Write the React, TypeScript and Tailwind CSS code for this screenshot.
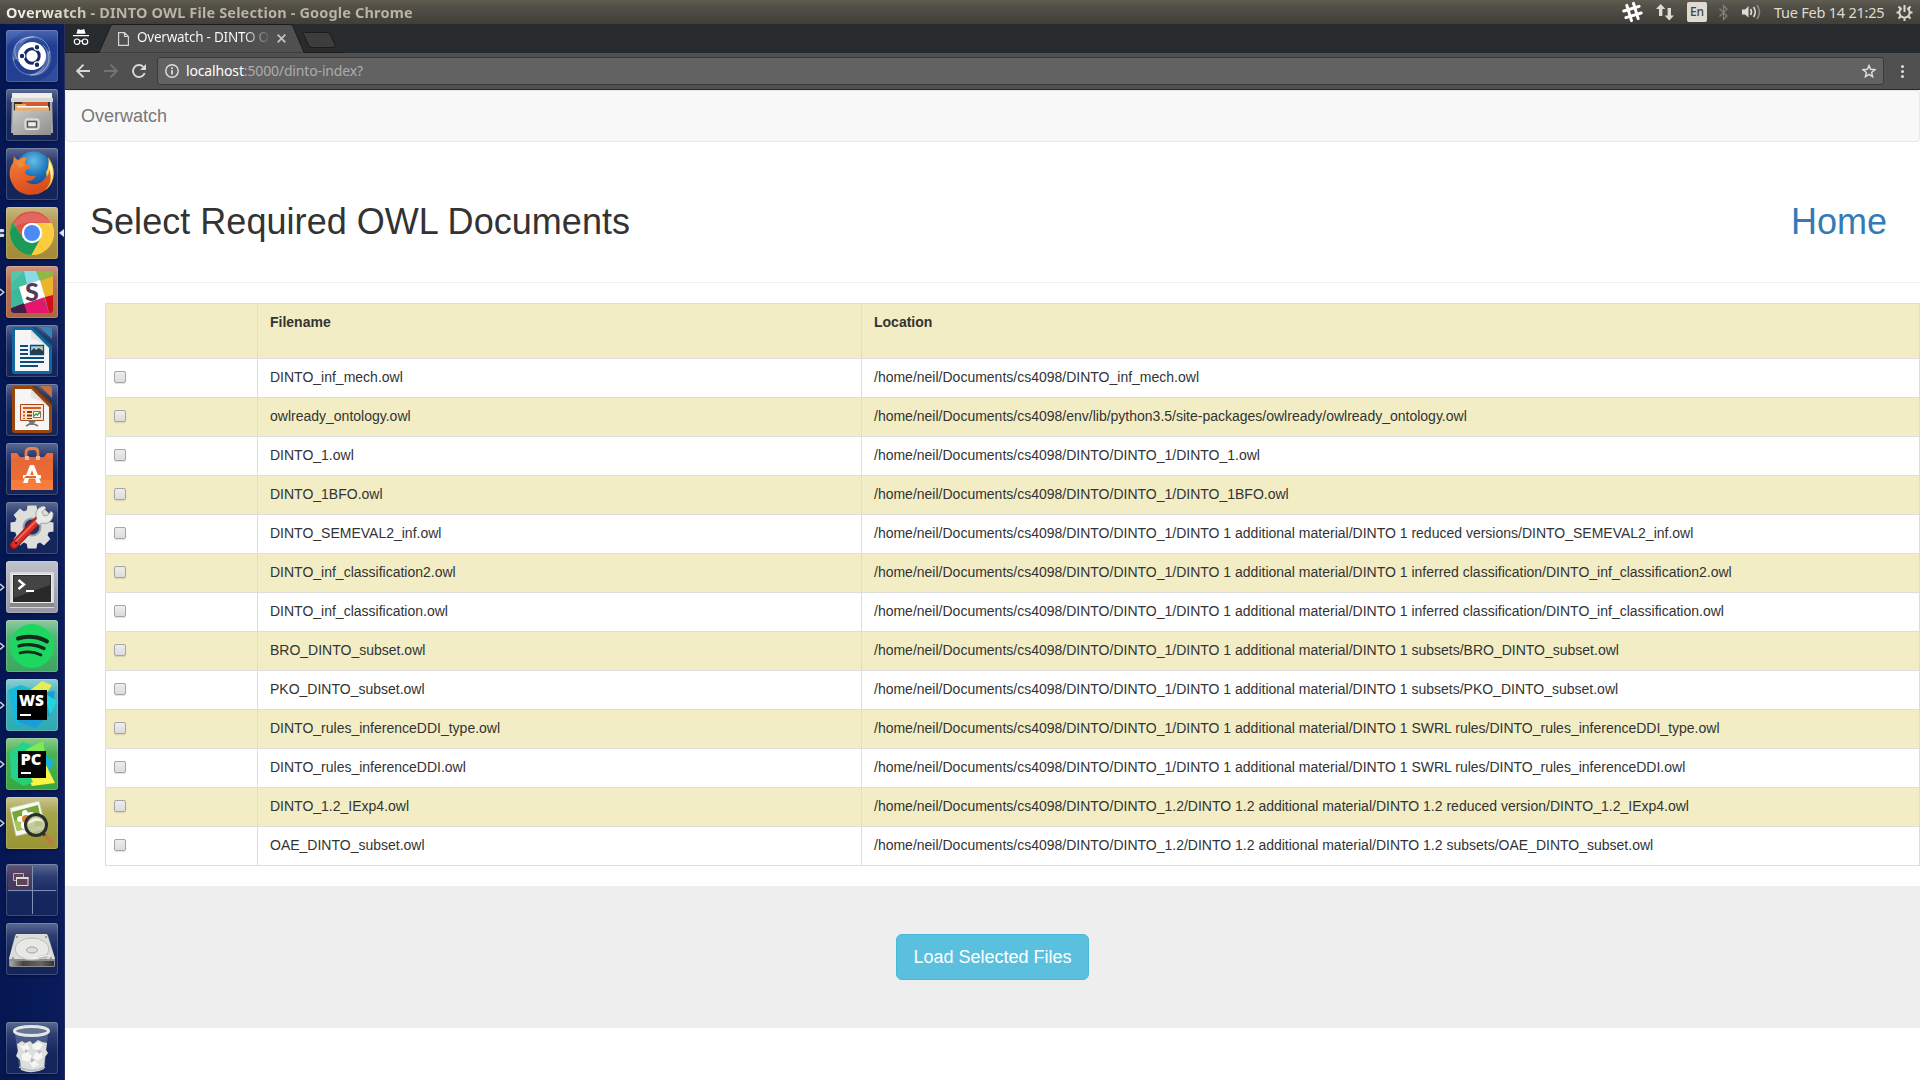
import React from 'react';

const files: [string, string][] = [
  ['DINTO_inf_mech.owl', '/home/neil/Documents/cs4098/DINTO_inf_mech.owl'],
  ['owlready_ontology.owl', '/home/neil/Documents/cs4098/env/lib/python3.5/site-packages/owlready/owlready_ontology.owl'],
  ['DINTO_1.owl', '/home/neil/Documents/cs4098/DINTO/DINTO_1/DINTO_1.owl'],
  ['DINTO_1BFO.owl', '/home/neil/Documents/cs4098/DINTO/DINTO_1/DINTO_1BFO.owl'],
  ['DINTO_SEMEVAL2_inf.owl', '/home/neil/Documents/cs4098/DINTO/DINTO_1/DINTO 1 additional material/DINTO 1 reduced versions/DINTO_SEMEVAL2_inf.owl'],
  ['DINTO_inf_classification2.owl', '/home/neil/Documents/cs4098/DINTO/DINTO_1/DINTO 1 additional material/DINTO 1 inferred classification/DINTO_inf_classification2.owl'],
  ['DINTO_inf_classification.owl', '/home/neil/Documents/cs4098/DINTO/DINTO_1/DINTO 1 additional material/DINTO 1 inferred classification/DINTO_inf_classification.owl'],
  ['BRO_DINTO_subset.owl', '/home/neil/Documents/cs4098/DINTO/DINTO_1/DINTO 1 additional material/DINTO 1 subsets/BRO_DINTO_subset.owl'],
  ['PKO_DINTO_subset.owl', '/home/neil/Documents/cs4098/DINTO/DINTO_1/DINTO 1 additional material/DINTO 1 subsets/PKO_DINTO_subset.owl'],
  ['DINTO_rules_inferenceDDI_type.owl', '/home/neil/Documents/cs4098/DINTO/DINTO_1/DINTO 1 additional material/DINTO 1 SWRL rules/DINTO_rules_inferenceDDI_type.owl'],
  ['DINTO_rules_inferenceDDI.owl', '/home/neil/Documents/cs4098/DINTO/DINTO_1/DINTO 1 additional material/DINTO 1 SWRL rules/DINTO_rules_inferenceDDI.owl'],
  ['DINTO_1.2_IExp4.owl', '/home/neil/Documents/cs4098/DINTO/DINTO_1.2/DINTO 1.2 additional material/DINTO 1.2 reduced version/DINTO_1.2_IExp4.owl'],
  ['OAE_DINTO_subset.owl', '/home/neil/Documents/cs4098/DINTO/DINTO_1.2/DINTO 1.2 additional material/DINTO 1.2 subsets/OAE_DINTO_subset.owl'],
];

/* ---------- Launcher artwork, each on a 52 x 52 grid ---------- */

const Dash = () => (
  <>
    <g fill="none" stroke="#fff">
      <path d="M15 34C4 24 7 6 28 7" strokeOpacity=".4" strokeWidth="1" />
      <path d="M14 13C20 3 42 4 44 24" strokeOpacity=".4" strokeWidth="1" />
      <path d="M37 15C49 26 42 46 24 45" strokeOpacity=".4" strokeWidth="1" />
      <path d="M38 37C29 51 8 45 7 27" strokeOpacity=".35" strokeWidth="1" />
    </g>
    <path d="M7 31C3 12 18 5 31 7C19 8 12 16 13 28ZM44 20C49 38 36 49 21 45C33 44 40 36 39 24Z" fill="#fff" opacity=".22" />
    <path d="M1 17C6 7 14 3 20 1L1 1ZM33 51C43 47 48 40 51 33V51Z" fill="#7c9ee8" opacity=".15" />
    <circle cx="26" cy="26" r="14" fill="#fff" />
    <circle cx="26" cy="26" r="7.2" fill="none" stroke="#182a66" strokeWidth="3" />
    <g stroke="#fff" strokeWidth="1.2" fill="#182a66">
      <circle cx="16" cy="26" r="2.8" />
      <circle cx="31" cy="17.3" r="2.8" />
      <circle cx="31" cy="34.7" r="2.8" />
    </g>
  </>
);

const Files = () => (
  <>
    <path d="M6 5h40l1 39H5z" fill="#a8a8a6" />
    <path d="M6 4h40v8H6z" fill="#eeeeec" />
    <path d="M5 9h42v4H5z" fill="#d5d5d3" />
    <path d="M8 13h36v9H8z" fill="#3a3532" />
    <path d="M16 13h26v5H16z" fill="#d05a33" />
    <path d="M9 15h11v7H9zM9 18h34v5H9z" fill="#f0ab62" />
    <path d="M11 17h31v1.4H11z" fill="#fff" />
    <path d="M7 21.5h38V46H7z" fill="url(#silver)" />
    <rect x="19" y="30" width="14" height="10.5" rx="2" fill="#c9c9c9" stroke="#ececec" />
    <rect x="21.5" y="32.5" width="9" height="5.5" fill="#eee" stroke="#555" strokeWidth="1.4" />
  </>
);

const Firefox = () => (
  <>
    <circle cx="27.5" cy="22.5" r="19" fill="url(#ffblue)" />
    <path d="M42 9C50 19 50 33 41 41L31 46C40 38 42 34 40 24C43 20 43 14 42 9Z" fill="#f7c53a" />
    <path d="M43 13C48 20 48 28 43 36C44 29 42 27 43 13Z" fill="#fff3a8" />
    <path d="M8 8C9 10 11 12 13 12C16 9 19 9 21 10C19 12 19 14 19 16L24 17C25 19 23 21 20 22L19 25C22 29 26 28 30 28C27 33 23 33 20 33C26 39 36 36 40 29C43 27 43 24 43 21C47 30 44 38 38 43C27 50 12 47 7 37C2 29 3 20 7 15Z" fill="url(#ffox)" />
    <path d="M13 12C16 9 19 9 21 10C19 12 18 15 19 17L14 20C9 15 11 14 13 12Z" fill="#f08a35" />
  </>
);

const Chrome = () => (
  <>
    <circle cx="26" cy="26" r="22" fill="#f9ca38" />
    <path d="M6.9 15.1A22 22 0 0 1 45.2 16H26L17 31Z" fill="#dc5549" />
    <path d="M6.9 15.1A22 22 0 0 0 25.5 48L35 31L26 36L17 31Z" fill="#1b9a59" />
    <path d="M25.5 48L35 31L35 16H45.6A22 22 0 0 1 25.5 48Z" fill="#fbcc3d" />
    <path d="M5 22A22 22 0 0 1 47 21C34 12 18 13 5 22Z" fill="#fff" opacity=".12" />
    <circle cx="26" cy="26" r="10.2" fill="#fff" />
    <circle cx="26" cy="26" r="8" fill="#4c8bf5" />
  </>
);

const Slack = () => (
  <>
    <defs><clipPath id="slackclip"><rect x="5" y="5" width="42" height="42" rx="3" /></clipPath></defs>
    <g clipPath="url(#slackclip)">
      <path d="M5 5H47V47H5Z" fill="#45bfa1" />
      <path d="M5 5H19L5 17Z" fill="#55c6ad" />
      <path d="M18 5H31L34 15L21 19Z" fill="#8bdbe7" />
      <path d="M30 5H47V10L34 15Z" fill="#8fb846" />
      <path d="M34 15L47 10V30L39 32Z" fill="#ecb32b" />
      <path d="M39 31L47 29V47H43Z" fill="#d60c18" />
      <path d="M18 38L38 31L43 47H20Z" fill="#e5176c" />
      <path d="M5 42L18 37L21 47H5Z" fill="#451c48" />
      <path d="M5 25L13 22L18 37L5 42Z" fill="#3cb89c" />
      <path d="M13 21L34 14L39 31L18 38Z" fill="#fff" />
    </g>
    <text x="26" y="35" textAnchor="middle" fontFamily="Lato" fontWeight="900" fontSize="25" fill="#583959">S</text>
  </>
);

const PageBase = ({ dark, light }: { dark: string; light: string }) => (
  <>
    <path d="M9 2H29L46 19V46Q46 49 43 49H9Q6 49 6 46V5Q6 2 9 2Z" fill={dark} />
    <path d="M34 2H43Q46 2 46 5V14Z" fill={light} />
    <path d="M26 2H31L46 17V22Z" fill="#0a2340" opacity=".35" />
    <path d="M9 5H25L43 23V46H9Z" fill="#f5f5f5" />
    <path d="M25 5V14C33 15 36 19 43 23Z" fill="#dcdcdc" opacity=".7" />
  </>
);

const Writer = () => (
  <>
    <PageBase dark="#12689c" light="#3486b8" />
    <path d="M14 20h8v2h-8zM14 24h8v2h-8zM14 28h8v2h-8zM14 32h24v2H14zM14 36h24v2H14zM14 40h18v2H14z" fill="#0d4c78" />
    <path d="M24.5 20.5h13v9h-13z" fill="#9ed0ee" stroke="#0d4c78" strokeWidth="1.3" />
    <path d="M25 29v-3l3-3 2 2 3-2 4 3v3z" fill="#2e3c40" />
    <circle cx="35.5" cy="22.5" r="1.3" fill="#e8be27" />
  </>
);

const Impress = () => (
  <>
    <PageBase dark="#99460f" light="#c6713d" />
    <path d="M14.5 20.5h23v16h-23z" fill="#fbe3d5" stroke="#ad450c" />
    <path d="M17 23h18v2H17zM17 27h2v2h-2zM17 30.5h2v2h-2zM17 34h2v1h-2z" fill="#d15e22" />
    <path d="M21 27h5v2h-5zM21 30.5h5v2h-5zM21 34h5v1h-5z" fill="#8c3205" />
    <path d="M27.5 27.5h7v6h-7z" fill="#fff" stroke="#777" />
    <path d="M28 32l2-2 1.5 1 2.5-3" stroke="#3a9c32" fill="none" strokeWidth="1.4" />
    <path d="M26 37v2l-6 3M26 39l6 3M26 37h-3l3 3 3-3z" stroke="#737373" strokeWidth="1.5" fill="#737373" />
  </>
);

const Software = () => (
  <>
    <path d="M5 14H47V47H5Z" fill="url(#bag)" />
    <path d="M5 37H47V47H5Z" fill="#ff8544" opacity=".6" />
    <path d="M5 10h6l3 4-9 2zM47 10h-6l-3 4 9 2z" fill="#ed6c38" />
    <path d="M20 16V10Q20 5.5 25 5.5H28Q32 5.5 32 10V16" stroke="#e9814f" strokeWidth="2.8" fill="none" />
    <path d="M19 13h4v4h-4zM30 13h4v4h-4z" fill="#f8b58f" />
    <path d="M24 22h4l7 18h-4.5L26 27l-4.500 13H17z" fill="#fff" />
    <path d="M17 32h18v3.500H17z" fill="#fff" />
    <path d="M20 33h10v2H18z" fill="#ed6520" />
  </>
);

const Settings = () => (
  <>
    <g transform="translate(26 25)" fill="#dededc">
      {[0, 45, 90, 135, 180, 225, 270, 315].map((a) => (
        <path key={a} d="M-5.500-15L-4.500-21.500H4.500L5.500-15Z" transform={`rotate(${a})`} />
      ))}
      <circle r="17.500" />
      <circle r="9.500" fill="#9b9da4" />
      <circle r="7.500" fill="#253463" />
    </g>
    <path d="M8 43L33 17" stroke="#9e1515" strokeWidth="8" strokeLinecap="round" />
    <path d="M8.500 42.500L32.500 17.500" stroke="#dc3027" strokeWidth="6" strokeLinecap="round" />
    <path d="M10 39L29 20" stroke="#f0786c" strokeWidth="1.500" strokeLinecap="round" />
    <path d="M31 17C28 11 31 5 38 4L40 6L36 10L38 14L42 13L45 9L47 11C48 18 42 23 36 21L33 23L29 19Z" fill="#e9e9e7" stroke="#929292" strokeWidth=".8" />
    <circle cx="10" cy="41" r="1.300" fill="#6c1313" />
  </>
);

const Terminal = () => (
  <>
    <path d="M4 11h44v36H4z" fill="#d9d9dc" />
    <path d="M4 42h44v4H4z" fill="#88888c" />
    <path d="M6 13h40v29H6z" fill="#eee" />
    <path d="M7 14h38v27H7z" fill="#292929" />
    <path d="M8 15h36v9L8 37z" fill="#565656" opacity=".6" />
    <path d="M12.500 19l5.500 4.500-5.500 4.500" stroke="#fff" strokeWidth="2.400" fill="none" />
    <path d="M20 29h8v2h-8z" fill="#fff" />
  </>
);

const Spotify = () => (
  <>
    <circle cx="26" cy="26" r="22" fill="#1ed760" />
    <g fill="none" stroke="#142a1d" strokeLinecap="round">
      <path d="M12 18.500C21 15.500 33 16.500 41 21.500" strokeWidth="4" />
      <path d="M13 26C21 23.500 31 24.500 38 28.500" strokeWidth="3.300" />
      <path d="M14 33C21 31 28 31.500 35 35" strokeWidth="2.700" />
    </g>
  </>
);

const WebStorm = () => (
  <>
    <path d="M2 11L15 6L30 12L20 45L9 46Z" fill="#18b9d8" />
    <path d="M22 13L36 2L46 6L36 22Z" fill="#e4ec59" />
    <path d="M30 14L49 12L45 35L29 49L12 43Z" fill="#199ed8" />
    <path d="M38 14L51 22L44 36Z" fill="#21d4e1" />
    <path d="M11 11h30v30H11z" fill="#000" />
    <path d="M14 35h11v2H14z" fill="#fff" />
    <text x="13" y="26.500" fontFamily="Open Sans" fontWeight="800" fontSize="15.500" fill="#fff" textLength="25" lengthAdjust="spacingAndGlyphs">WS</text>
  </>
);

const PyCharm = () => (
  <>
    <path d="M4 14L17 4L30 10L18 48L5 40Z" fill="#23d38c" />
    <path d="M19 12L37 3L40 20Z" fill="#7de953" />
    <path d="M37 14L48 24L42 34Z" fill="#19b2df" />
    <path d="M38 23L49 45L26 48L20 37Z" fill="#f7f644" />
    <path d="M8 42L24 38L27 44L18 48Z" fill="#27ce73" />
    <path d="M12 13h28v27H12z" fill="#050505" />
    <path d="M15 34h10v2H15z" fill="#fff" />
    <text x="14.500" y="27" fontFamily="Open Sans" fontWeight="800" fontSize="15.500" fill="#fff" textLength="21" lengthAdjust="spacingAndGlyphs">PC</text>
  </>
);

const ImageViewer = () => (
  <>
    <path d="M4 11L33 4L40 32L10 39Z" fill="#f8f8f5" stroke="#c9c9bd" strokeWidth=".7" />
    <path d="M6 15L32 8L36 28L11 34Z" fill="#74a735" />
    <path d="M8 24L34 17L36 28L11 34Z" fill="#a6c65a" />
    <g fill="#fff">
      <ellipse cx="19" cy="17" rx="3" ry="4" /><ellipse cx="25" cy="18" rx="4" ry="3" />
      <ellipse cx="15" cy="22" rx="4" ry="3" /><ellipse cx="18" cy="28" rx="3" ry="4" /><ellipse cx="25" cy="27" rx="4" ry="3" />
    </g>
    <circle cx="20" cy="22" r="4" fill="#e0821f" />
    <circle cx="30" cy="28" r="10.500" fill="#b9c18c" fillOpacity=".8" stroke="#292d2e" strokeWidth="3" />
    <path d="M22 27C25 19 34 19 37 25C32 23 28 24 22 27Z" fill="#fff" opacity=".75" />
    <path d="M37 36L40 40" stroke="#333" strokeWidth="3" />
    <path d="M40 40L46 46" stroke="#bd7a42" strokeWidth="4.500" strokeLinecap="round" />
  </>
);

const Workspace = () => (
  <>
    <path d="M2 2H26V26H2Z" fill="#66405a" opacity=".55" />
    <path d="M26.500 2V50M2 26.500H50" stroke="#818fb3" strokeWidth="1" />
    <path d="M7.500 9.500h10v7H7.500z" fill="#604554" stroke="#bdb2bd" />
    <path d="M10.500 13.500h11.500v8H10.500z" fill="#604554" stroke="#e6e0e4" />
    <path d="M10 14h12.500" stroke="#ddd" strokeWidth="2" />
  </>
);

const Disk = () => (
  <>
    <path d="M9 12H42L49 35V43Q49 44 47 44H5Q3 44 3 42V35Z" fill="#8d8d8b" />
    <path d="M10 11H41L49 36H3Z" fill="#dcdcda" />
    <path d="M4 38H48V43H4Z" fill="url(#diskfront)" />
    <ellipse cx="26" cy="26" rx="17" ry="11" fill="#e8e8e6" stroke="#bcbcba" />
    <ellipse cx="26" cy="27" rx="5.500" ry="3" fill="#ddd" stroke="#a5a5a3" />
    <path d="M29 34L43 31L40 36Z" fill="#bbb" />
    <path d="M27 35L44 32" stroke="#f8f8f8" />
    <circle cx="11" cy="14" r="1" fill="#888" /><circle cx="40" cy="14" r="1" fill="#888" />
    <circle cx="7" cy="35" r="1" fill="#888" /><circle cx="45" cy="35" r="1" fill="#888" />
  </>
);

const Trash = () => (
  <>
    <path d="M9 11L13 45Q26 51 39 45L42 11Z" fill="#8796b4" opacity=".4" />
    <path d="M11 22l5-3 3 2 5-2 3 3 5-4 4 2 5 1-1 7 2 3-3 4-1 12q-11 6-23 1l-1-10-4-4 2-5z" fill="#dcdedc" />
    <path d="M13 23l5 1 3-3 3 6-6 2zM26 23l7-3 4 3-4 5-6-1zM16 32l6-2 4 4-4 6-6-2zM29 31l6-1 2 5-5 4-5-3zM23 40l6-2 4 5-6 3z" fill="#f6f6f4" />
    <path d="M19 27l3 2-3 2zM31 28l5 1-3 3zM25 36l4 2-4 3z" fill="#b6babc" />
    <ellipse cx="25.500" cy="9" rx="17" ry="4.500" fill="#667593" stroke="#e4e6e5" strokeWidth="3" />
    <path d="M13 45Q26 52 39 45" stroke="#b4b9b8" strokeWidth="1.500" fill="none" />
  </>
);

const glass = 'bg-[linear-gradient(180deg,#5d6b92_0%,#2b3d72_24%,#14265f_60%,#15255b_100%)]';

type Item = { art: () => React.ReactElement; bg: string; mark?: 'open' | 'active' };
const apps: Item[] = [
  { art: Dash, bg: 'bg-[linear-gradient(180deg,#4a66b0_0%,#1f3f95_30%,#234092_100%)]' },
  { art: Files, bg: glass },
  { art: Firefox, bg: glass },
  { art: Chrome, bg: 'bg-[linear-gradient(180deg,#c9b882_0%,#b39c55_28%,#a38a37_100%)]', mark: 'active' },
  { art: Slack, bg: 'bg-[linear-gradient(180deg,#cb9680_0%,#b97454_30%,#a96843_100%)]', mark: 'open' },
  { art: Writer, bg: glass },
  { art: Impress, bg: glass },
  { art: Software, bg: glass },
  { art: Settings, bg: glass },
  { art: Terminal, bg: 'bg-[linear-gradient(180deg,#c2c2cb_0%,#aaaab5_50%,#9797a3_100%)]', mark: 'open' },
  { art: Spotify, bg: 'bg-[linear-gradient(180deg,#91c9a2_0%,#54b878_30%,#39a65e_100%)]', mark: 'open' },
  { art: WebStorm, bg: 'bg-[linear-gradient(180deg,#8bd0d2_0%,#48b5bc_30%,#2fa9b0_100%)]', mark: 'open' },
  { art: PyCharm, bg: 'bg-[linear-gradient(180deg,#8acc8b_0%,#4bb354_30%,#39a541_100%)]', mark: 'open' },
  { art: ImageViewer, bg: 'bg-[linear-gradient(180deg,#cac790_0%,#a7a44d_30%,#999431_100%)]', mark: 'open' },
];

const Tile = ({ art: Art, bg, mark }: Item) => (
  <div className="flex h-[52px] w-[64px] shrink-0 items-center">
    <svg className="h-[12px] w-[6px] shrink-0" viewBox="0 0 6 12">
      {mark === 'open' && <path d="M0 3L3.800 6.200L0 9.400" fill="none" stroke="#d5d8e4" strokeWidth="1.400" />}
      {mark === 'active' && <path d="M0 2H3.500L4.500 3.700L3.500 5.300H0ZM0 6.700H3.500L4.500 8.300L3.500 10H0Z" fill="#d8dae2" />}
    </svg>
    <div className={`h-[52px] w-[52px] shrink-0 overflow-hidden rounded-[3px] shadow-[inset_0_0_0_1px_rgba(255,255,255,0.18),0_1px_3px_rgba(0,0,0,0.4)] ${bg}`}>
      <svg viewBox="0 0 52 52" className="h-full w-full"><Art /></svg>
    </div>
    {mark === 'active' && (
      <svg className="ml-px h-[10px] w-[5px] shrink-0" viewBox="0 0 5 10"><path d="M5 1V9L0 5Z" fill="#e4e5ea" /></svg>
    )}
  </div>
);

const Launcher = () => (
  <aside className="flex w-[65px] shrink-0 flex-col gap-[7px] border-r border-[#27305a] bg-[linear-gradient(90deg,#041752_0%,#0a1c5c_100%)] pt-[6px]">
    <svg className="absolute h-0 w-0">
      <defs>
        <linearGradient id="silver" x1="0" y1="0" x2="1" y2="1"><stop stopColor="#c9c9c7" /><stop offset="1" stopColor="#8e8e8c" /></linearGradient>
        <radialGradient id="ffblue" cx=".5" cy=".25" r=".8"><stop stopColor="#62bfe8" /><stop offset=".5" stopColor="#1d70b8" /><stop offset="1" stopColor="#123a7a" /></radialGradient>
        <linearGradient id="ffox" x1="0" y1="0" x2=".3" y2="1"><stop stopColor="#ef8a3c" /><stop offset=".6" stopColor="#e8602a" /><stop offset="1" stopColor="#d94c1d" /></linearGradient>
        <linearGradient id="bag" x1="0" y1="0" x2="0" y2="1"><stop stopColor="#e2673a" /><stop offset="1" stopColor="#f4702c" /></linearGradient>
        <linearGradient id="diskfront"><stop stopColor="#aaa" /><stop offset=".3" stopColor="#444" /><stop offset=".7" stopColor="#666" /><stop offset="1" stopColor="#333" /></linearGradient>
      </defs>
    </svg>
    {apps.map((a, i) => <Tile key={i} {...a} />)}
    <div className="mt-[8px]"><Tile art={Workspace} bg={glass} /></div>
    <Tile art={Disk} bg={glass} />
    <div className="mt-[40px]"><Tile art={Trash} bg={glass} /></div>
  </aside>
);

const SystemBar = () => (
  <header className="flex h-[24px] shrink-0 items-center justify-between bg-[linear-gradient(180deg,#5f5d50_0%,#55524a_20%,#403e38_100%)] font-['Noto_Sans'] text-[#dfdbd2]">
    <div className="ml-[6px] w-[430px] whitespace-nowrap bg-[linear-gradient(90deg,#f4f1e8_0px,#e5e0d5_50px,#bab5a6_95px)] bg-clip-text text-[14.500px] leading-[23px] font-bold tracking-[0.155px] text-transparent">
      Overwatch - DINTO OWL File Selection - Google Chrome
    </div>
    <div className="flex h-[24px] items-center">
      <svg className="mr-[13px] h-[22px] w-[21px]" viewBox="0 0 21 22">
        <g transform="rotate(-17 10.500 11)" stroke="#fff" strokeWidth="3" strokeLinecap="round">
          <path d="M7 3V19M14 3V19M2.500 7.500H18.500M2.500 14.500H18.500" />
        </g>
      </svg>
      <svg className="mr-[13px] h-[18px] w-[18px]" viewBox="0 0 18 18" fill="#dfdbd2">
        <path d="M4.700 1L9.400 6H6.400V13H3V6H0ZM13.300 17.500L8.600 12.500H11.600V5H15V12.500H18Z" />
      </svg>
      <div className="mr-[12px] h-[20px] w-[20px] rounded-[2px] bg-[#dfdbd2] text-center text-[12px] leading-[20px] font-medium text-[#45433c]">En</div>
      <svg className="mr-[13px] h-[17px] w-[9px]" viewBox="0 0 9 17" fill="none" stroke="#858177" strokeWidth="1.200">
        <path d="M.5 4.500L8 12L4.500 15.500V1.500L8 5L.5 12.500" />
      </svg>
      <svg className="mr-[12px] h-[18px] w-[21px]" viewBox="0 0 21 18" fill="none" stroke="#dfdbd2" strokeWidth="1.600">
        <path d="M1 6.500H4L7.500 3V14.500L4 11.500H1Z" fill="#dfdbd2" stroke="none" />
        <path d="M9.500 6Q11.500 9 9.500 12M12.500 4Q16 9 12.500 14" />
        <path d="M16 2Q21 9 16 16" stroke="#8e8a80" />
      </svg>
      <div className="mr-[12px] w-[110px] whitespace-nowrap text-[14.500px] leading-[23px] tracking-[-0.230px]">Tue Feb 14 21:25</div>
      <svg className="mr-[7px] h-[17px] w-[17px]" viewBox="0 0 17 17" fill="none" stroke="#dfdbd2">
        <path d="M5.600 4.200A5.200 5.200 0 1 0 11.400 4.200" strokeWidth="2" />
        <path d="M8.500 1V8" strokeWidth="2" />
        <path d="M8.500 14.500V17M.500 8.500H3M14 8.500H16.500M2.500 2.500L4.600 4.600M14.500 2.500L12.400 4.600M2.500 14.500L4.600 12.400M14.500 14.500L12.400 12.400" strokeWidth="2" />
      </svg>
    </div>
  </header>
);

const TabStrip = () => (
  <div className="relative flex h-[29px] items-start bg-[#272b2e]">
    <svg className="absolute top-0 left-0 h-[29px] w-[280px]" viewBox="0 0 280 29">
      <path d="M0 28.500H34L45.500 2.500Q46.500 .5 48.500 .5H225Q227 .5 228 2.500L239 28.500H280" fill="#505050" stroke="#1b1d1f" />
      <path d="M239.500 8.500H262Q264 8.500 265 10L270 21Q271 23.500 269 23.500H247.500Q245 23.500 244 21.500L238.500 10.500Q237.700 8.500 239.500 8.500Z" fill="#3d3d3d" stroke="#1b1d1f" />
    </svg>
    <svg className="relative mt-[5px] ml-[8px] h-[17px] w-[16px]" viewBox="0 0 16 17" fill="#fff">
      <path d="M4.800 0L8 1L11.200 0L12.600 4.800H3.400ZM0 6H16V7.300H0Z" />
      <g fill="none" stroke="#fff" strokeWidth="1.200"><circle cx="4" cy="12.700" r="2.700" /><circle cx="12" cy="12.700" r="2.700" /><path d="M6.700 12.300Q8 11.300 9.300 12.300" /></g>
    </svg>
    <svg className="relative mt-[8px] ml-[29px] h-[14px] w-[11px]" viewBox="0 0 11 14" fill="none" stroke="#d4d4d4" strokeWidth="1.200">
      <path d="M.600 .600H6.500L10.400 4.500V13.400H.600ZM6.500 .600V4.500H10.400" />
    </svg>
    <div className="relative mt-[3px] ml-[8px] w-[134px] overflow-hidden whitespace-nowrap bg-[linear-gradient(90deg,#fff_0px,#fff_106px,#505050_134px)] bg-clip-text font-['Noto_Sans'] text-[13.500px] leading-[21px] tracking-[-0.240px] text-transparent">
      Overwatch - DINTO O
    </div>
    <svg className="relative mt-[10px] ml-[6px] h-[9px] w-[9px]" viewBox="0 0 9 9" stroke="#c4c4c4" strokeWidth="1.700"><path d="M.700 .700L8.300 8.300M8.300 .700L.700 8.300" /></svg>
  </div>
);

const Toolbar = () => (
  <div className="flex h-[37px] items-start border-b border-[#2e2630] bg-[#505050] pt-[4px]">
    <svg className="mt-[7px] ml-[11px] h-[14px] w-[14px]" viewBox="0 0 14 14" fill="none" stroke="#d8d8d8" strokeWidth="1.900"><path d="M14 7H1.500M7.500 .700L1.200 7L7.500 13.300" /></svg>
    <svg className="mt-[7px] ml-[14px] h-[14px] w-[14px]" viewBox="0 0 14 14" fill="none" stroke="#737373" strokeWidth="1.900"><path d="M0 7H12.500M6.500 .700L12.800 7L6.500 13.300" /></svg>
    <svg className="mt-[7px] ml-[14px] h-[14px] w-[14px]" viewBox="0 0 14 14"><path d="M12.700 9A6 6 0 1 1 11.300 2.800" fill="none" stroke="#d8d8d8" strokeWidth="1.900" /><path d="M14 0V6H8Z" fill="#d8d8d8" /></svg>
    <div className="ml-[11px] flex h-[28px] w-[1727px] items-center rounded-[3px] border border-[#3a3a3a] bg-[#626262] font-['Noto_Sans'] text-[14px] tracking-[-0.150px]">
      <svg className="ml-[7px] h-[14px] w-[14px]" viewBox="0 0 14 14" fill="none" stroke="#e0e0e0" strokeWidth="1.400"><circle cx="7" cy="7" r="6.200" /><path d="M7 6V10.500M7 3.300V4.900" strokeWidth="1.700" /></svg>
      <div className="ml-[7px] whitespace-nowrap leading-[24px] text-[#acacac]"><span className="text-white">localhost</span>:5000/dinto-index?</div>
      <svg className="mr-[7px] ml-auto h-[14px] w-[14px]" viewBox="0 0 14 14" fill="none" stroke="#e0e0e0" strokeWidth="1.400"><path d="M7 1.500L8.600 5.300L12.900 5.700L9.600 8.400L10.600 12.700L7 10.400L3.400 12.700L4.400 8.400L1.100 5.700L5.400 5.300Z" /></svg>
    </div>
    <svg className="mt-[8px] ml-[17px] h-[13px] w-[3px]" viewBox="0 0 3 13" fill="#dedede"><circle cx="1.500" cy="1.500" r="1.500" /><circle cx="1.500" cy="6.500" r="1.500" /><circle cx="1.500" cy="11.500" r="1.500" /></svg>
  </div>
);

const cell = 'border-r border-b border-[#ddd]';

const Page = () => (
  <main className="flex-1 bg-white font-['Liberation_Sans',sans-serif] text-[14px] text-[#333]">
    <nav className="h-[52px] rounded-[4px] border border-[#e7e7e7] bg-[#f8f8f8] pl-[15px] text-[18px] leading-[50px] text-[#777]">Overwatch</nav>
    <div className="flex h-[141px] items-start justify-between border-b border-[#eee] pt-[60px] pr-[33px] pl-[25px] text-[36px] leading-[40px]">
      <h1 className="tracking-[0.040px]">Select Required OWL Documents</h1>
      <a className="text-[#337ab7]">Home</a>
    </div>
    <div className="mt-[20px] ml-[40px] border-t border-l border-[#ddd]">
      <div className="grid h-[55px] grid-cols-[152px_604px_1058px] bg-[#f2edc4] leading-[20px] font-bold">
        <div className={cell} />
        <div className={`${cell} pt-[8px] pl-[12px]`}>Filename</div>
        <div className={`${cell} pt-[8px] pl-[12px]`}>Location</div>
      </div>
      {files.map(([name, path]) => (
        <div key={name} className="grid h-[39px] grid-cols-[152px_604px_1058px] leading-[20px] even:bg-white odd:bg-[#f2edc4]">
          <div className={`${cell} pt-[12px] pl-[8px]`}>
            <input type="checkbox" className="block h-[12px] w-[12px] appearance-none rounded-[2px] border border-[#a5a5a5] bg-[linear-gradient(180deg,#ededed,#dcdcdc)] shadow-[0_1px_1px_rgba(0,0,0,0.12)]" />
          </div>
          <div className={`${cell} pt-[8px] pl-[12px]`}>{name}</div>
          <div className={`${cell} pt-[8px] pl-[12px] whitespace-nowrap`}>{path}</div>
        </div>
      ))}
    </div>
    <section className="mt-[20px] flex h-[142px] items-center justify-center bg-[#eee]">
      <button className="h-[46px] w-[193px] rounded-[6px] border border-[#46b8da] bg-[#5bc0de] text-[18px] leading-[24px] whitespace-nowrap text-white">Load Selected Files</button>
    </section>
  </main>
);

export default function App() {
  return (
    <div className="flex h-[1080px] w-[1920px] flex-col overflow-hidden">
      <SystemBar />
      <div className="flex min-h-0 flex-1">
        <Launcher />
        <div className="flex min-w-0 flex-1 flex-col">
          <TabStrip />
          <Toolbar />
          <Page />
        </div>
      </div>
    </div>
  );
}
